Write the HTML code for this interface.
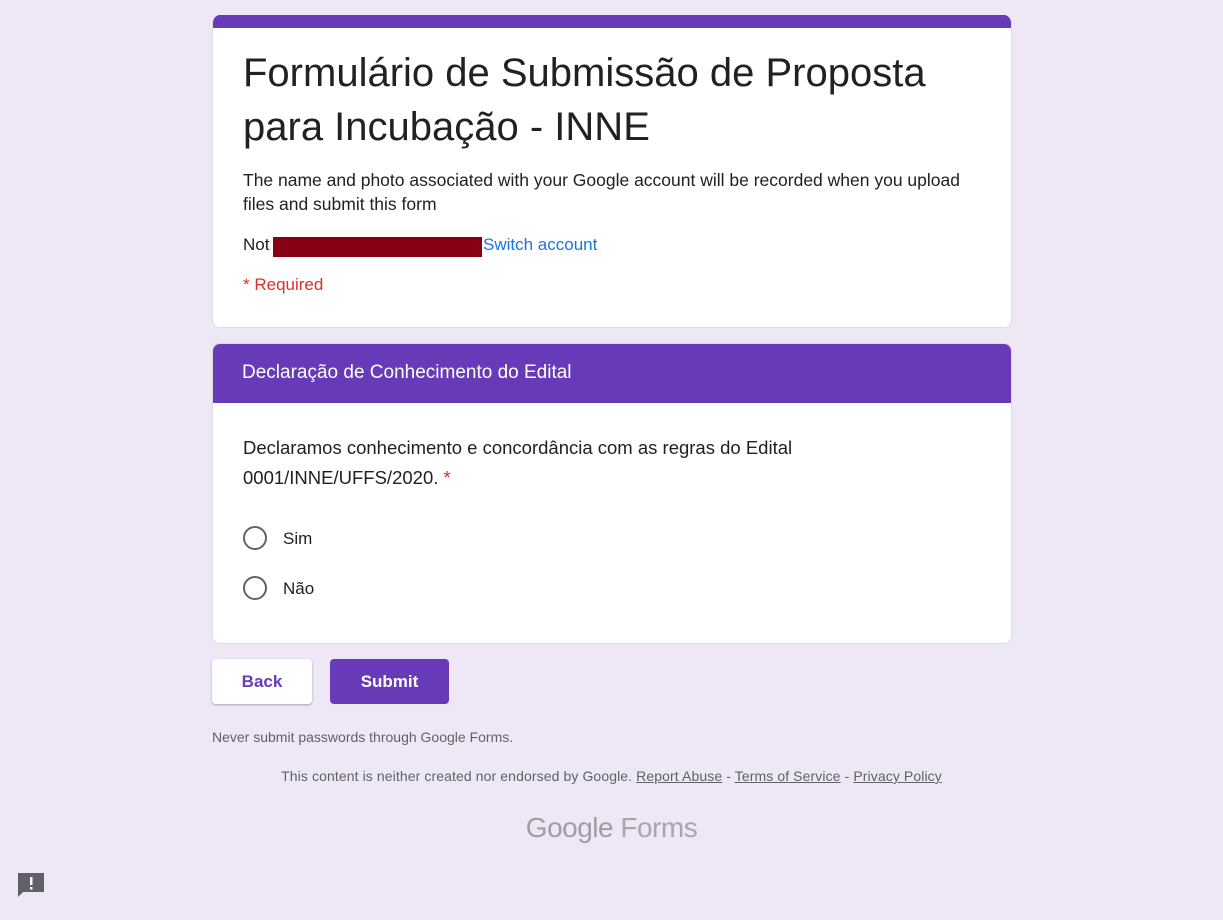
<!DOCTYPE html>
<html><head><meta charset="utf-8"><style>
body{margin:0;background:#ede7f6;font-family:"Liberation Sans",Arial,sans-serif;color:#202124;width:1223px;height:920px;position:relative;overflow:hidden}
.card{position:absolute;left:212px;width:800px;background:#fff;border:1px solid #dadce0;border-radius:8px;box-sizing:border-box}
.t{position:absolute;white-space:nowrap}
.radio{position:absolute;left:243px;width:24px;height:24px;border:2px solid #5f6368;border-radius:50%;box-sizing:border-box}
</style></head><body>
<div class="card" style="top:15px;height:313px;border-top:none;overflow:hidden">
<div style="height:13px;background:#673ab7"></div>
</div>
<div class="t" style="left:243px;top:46px;font-size:40px;line-height:54px;color:#202124">Formulário de Submissão de Proposta<br>para Incubação - INNE</div>
<div class="t" style="left:243px;top:168px;font-size:17.5px;line-height:24px">The name and photo associated with your Google account will be recorded when you upload<br>files and submit this form</div>
<div class="t" style="left:243px;top:233px;font-size:17px;line-height:24px">Not</div>
<div style="position:absolute;left:273px;top:237px;width:209px;height:20px;background:#880015"></div>
<div class="t" style="left:483px;top:233px;font-size:17px;line-height:24px;color:#1a73e8">Switch account</div>
<div class="t" style="left:243px;top:273px;font-size:17px;line-height:24px;color:#d93025">* Required</div>

<div class="card" style="top:343px;height:301px;overflow:hidden">
<div style="height:60px;background:#673ab7;margin:-1px -1px 0"></div>
</div>
<div class="t" style="left:242px;top:361px;font-size:19px;line-height:24px;color:#fff">Declaração de Conhecimento do Edital</div>
<div class="t" style="left:243px;top:433px;font-size:18.5px;line-height:30px">Declaramos conhecimento e concordância com as regras do Edital<br>0001/INNE/UFFS/2020. <span style="color:#d93025">*</span></div>
<div class="radio" style="top:526px"></div>
<div class="t" style="left:283px;top:528px;font-size:17px;line-height:22px">Sim</div>
<div class="radio" style="top:576px"></div>
<div class="t" style="left:283px;top:578px;font-size:17px;line-height:22px">Não</div>

<div style="position:absolute;left:212px;top:659px;width:100px;height:45px;background:#fff;border-radius:4px;box-shadow:0 1px 2px rgba(0,0,0,.3);color:#673ab7;font-size:17px;font-weight:bold;text-align:center;line-height:45px">Back</div>
<div style="position:absolute;left:330px;top:659px;width:119px;height:45px;background:#673ab7;border-radius:4px;color:#fff;font-size:17px;font-weight:bold;text-align:center;line-height:45px">Submit</div>
<div class="t" style="left:212px;top:729px;font-size:14px;color:#5f6368">Never submit passwords through Google Forms.</div>
<div class="t" style="left:0;width:1223px;text-align:center;top:768px;font-size:14px;color:#5f6368;letter-spacing:0.1px">This content is neither created nor endorsed by Google. <u>Report Abuse</u> - <u>Terms of Service</u> - <u>Privacy Policy</u></div>
<div class="t" style="left:0;width:1223px;text-align:center;top:812px;font-size:28px;color:#a8a5ae;letter-spacing:-0.5px"><span style="color:#a09da6">Google</span> Forms</div>
<svg style="position:absolute;left:16px;top:871px" width="30" height="30" viewBox="0 0 30 30"><path d="M2 2h26v19H7l-5 5z" fill="#625e6a"/><rect x="14" y="6" width="2.5" height="8" fill="#fff"/><rect x="14" y="16" width="2.5" height="2.5" fill="#fff"/></svg>
</body></html>
